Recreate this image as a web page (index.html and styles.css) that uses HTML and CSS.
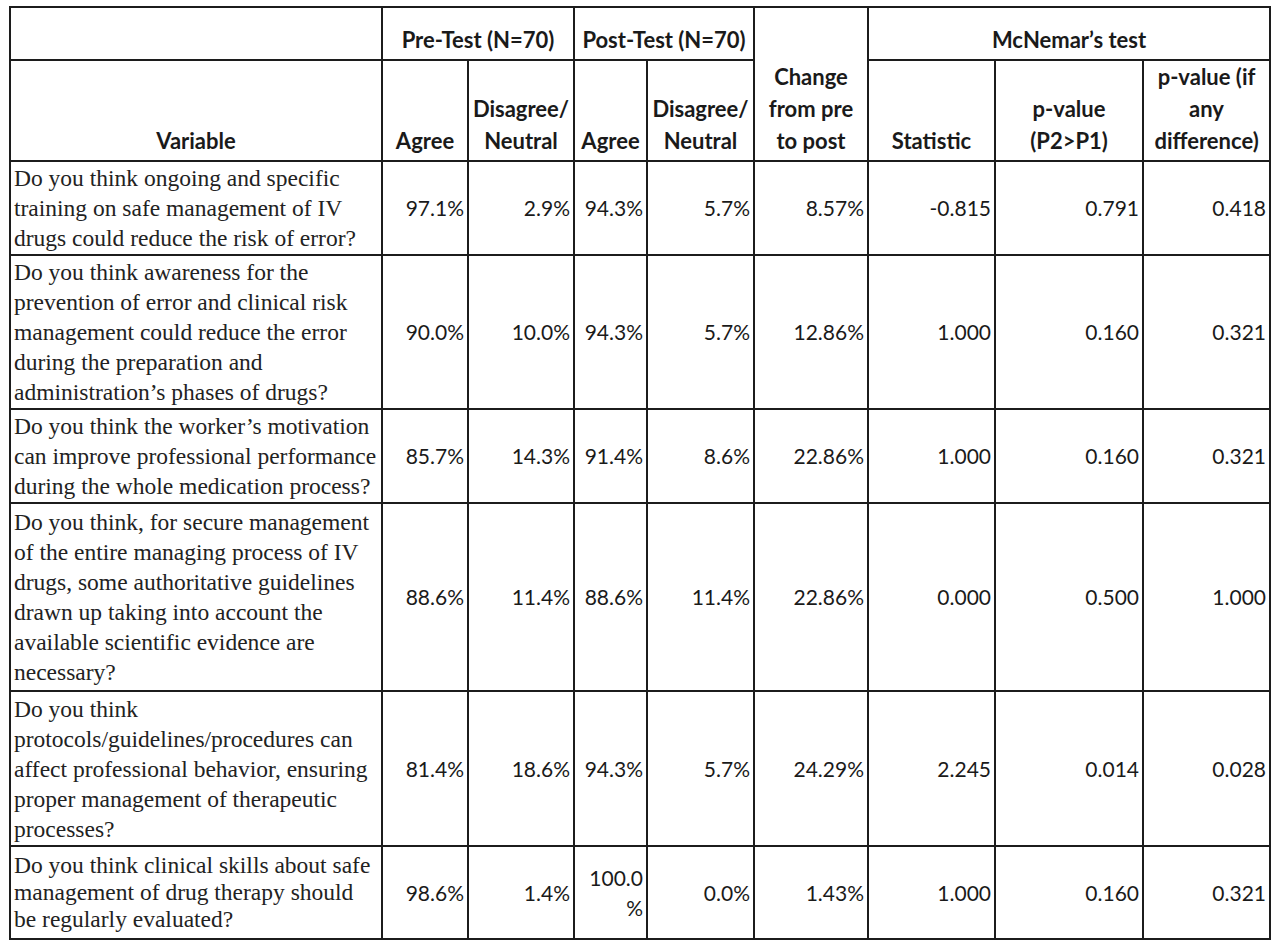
FILE: index.html
```html
<!DOCTYPE html>
<html>
  <head>
    <link rel="stylesheet" href="styles.css">
  </head>
  <body>
    <table class="results">
      <colgroup>
        <col class="col-var">
        <col class="col-pre-agree">
        <col class="col-pre-dis">
        <col class="col-post-agree">
        <col class="col-post-dis">
        <col class="col-change">
        <col class="col-stat">
        <col class="col-p1">
        <col class="col-p2">
      </colgroup>
      <thead>
        <tr class="head-top">
          <th></th>
          <th colspan="2">Pre-Test (N=70)</th>
          <th colspan="2">Post-Test (N=70)</th>
          <th rowspan="2">Change<br>from pre<br>to post</th>
          <th colspan="3">McNemar’s test</th>
        </tr>
        <tr class="head-sub">
          <th>Variable</th>
          <th>Agree</th>
          <th>Disagree/<br>Neutral</th>
          <th>Agree</th>
          <th>Disagree/<br>Neutral</th>
          <th>Statistic</th>
          <th>p-value<br>(P2&gt;P1)</th>
          <th>p-value (if<br>any<br>difference)</th>
        </tr>
      </thead>
      <tbody>
        <tr class="row-3">
          <td class="question">Do you think ongoing and specific training on safe management of IV drugs could reduce the risk of error?</td>
          <td>97.1%</td>
          <td>2.9%</td>
          <td>94.3%</td>
          <td>5.7%</td>
          <td>8.57%</td>
          <td>-0.815</td>
          <td>0.791</td>
          <td>0.418</td>
        </tr>
        <tr class="row-5">
          <td class="question">Do you think awareness for the prevention of error and clinical risk management could reduce the error during the preparation and administration’s phases of drugs?</td>
          <td>90.0%</td>
          <td>10.0%</td>
          <td>94.3%</td>
          <td>5.7%</td>
          <td>12.86%</td>
          <td>1.000</td>
          <td>0.160</td>
          <td>0.321</td>
        </tr>
        <tr class="row-3">
          <td class="question">Do you think the worker’s motivation can improve professional performance during the whole medication process?</td>
          <td>85.7%</td>
          <td>14.3%</td>
          <td>91.4%</td>
          <td>8.6%</td>
          <td>22.86%</td>
          <td>1.000</td>
          <td>0.160</td>
          <td>0.321</td>
        </tr>
        <tr class="row-6">
          <td class="question">Do you think, for secure management of the entire managing process of IV drugs, some authoritative guidelines drawn up taking into account the available scientific evidence are necessary?</td>
          <td>88.6%</td>
          <td>11.4%</td>
          <td>88.6%</td>
          <td>11.4%</td>
          <td>22.86%</td>
          <td>0.000</td>
          <td>0.500</td>
          <td>1.000</td>
        </tr>
        <tr class="row-5b">
          <td class="question">Do you think protocols/guidelines/procedures can affect professional behavior, ensuring proper management of therapeutic processes?</td>
          <td>81.4%</td>
          <td>18.6%</td>
          <td>94.3%</td>
          <td>5.7%</td>
          <td>24.29%</td>
          <td>2.245</td>
          <td>0.014</td>
          <td>0.028</td>
        </tr>
        <tr class="row-3b">
          <td class="question">Do you think clinical skills about safe management of drug therapy should be regularly evaluated?</td>
          <td>98.6%</td>
          <td>1.4%</td>
          <td>100.0<br>%</td>
          <td>0.0%</td>
          <td>1.43%</td>
          <td>1.000</td>
          <td>0.160</td>
          <td>0.321</td>
        </tr>
      </tbody>
    </table>
  </body>
</html>
```

FILE: styles.css
```css
body {
  margin: 0;
  padding: 0;
  background: #fff;
  color: #1a1a1a;
}

.results {
  margin: 6px 0 0 9px;
  border-collapse: collapse;
  table-layout: fixed;
  width: 1260px;
  font-family: Lato, "Liberation Sans", sans-serif;
  font-size: 21px;
}

.col-var { width: 372px; }
.col-pre-agree { width: 86px; }
.col-pre-dis { width: 106px; }
.col-post-agree { width: 73px; }
.col-post-dis { width: 107px; }
.col-change { width: 114px; }
.col-stat { width: 127px; }
.col-p1 { width: 148px; }
.col-p2 { width: 127px; }

.results th,
.results td {
  border: 2px solid #1c1c1c;
  padding: 0 3px;
}

.results th {
  font-size: 22px;
  font-weight: bold;
  text-align: center;
  vertical-align: bottom;
  line-height: 32px;
  padding-bottom: 3px;
}

.head-top { height: 53px; }
.head-sub { height: 100px; }

.results td {
  text-align: right;
  vertical-align: middle;
  line-height: 30px;
}

.results td.question {
  font-family: "Liberation Serif", "Times New Roman", serif;
  font-size: 23.5px;
  text-align: left;
  line-height: 30px;
  padding: 0 1px 0 3px;
  color: #222;
}

.row-3 { height: 94px; }
.row-5 { height: 154px; }
.row-6 { height: 188px; }
.row-5b { height: 155px; }
.row-3b { height: 93px; }

.row-3b td.question { line-height: 27px; }
```
